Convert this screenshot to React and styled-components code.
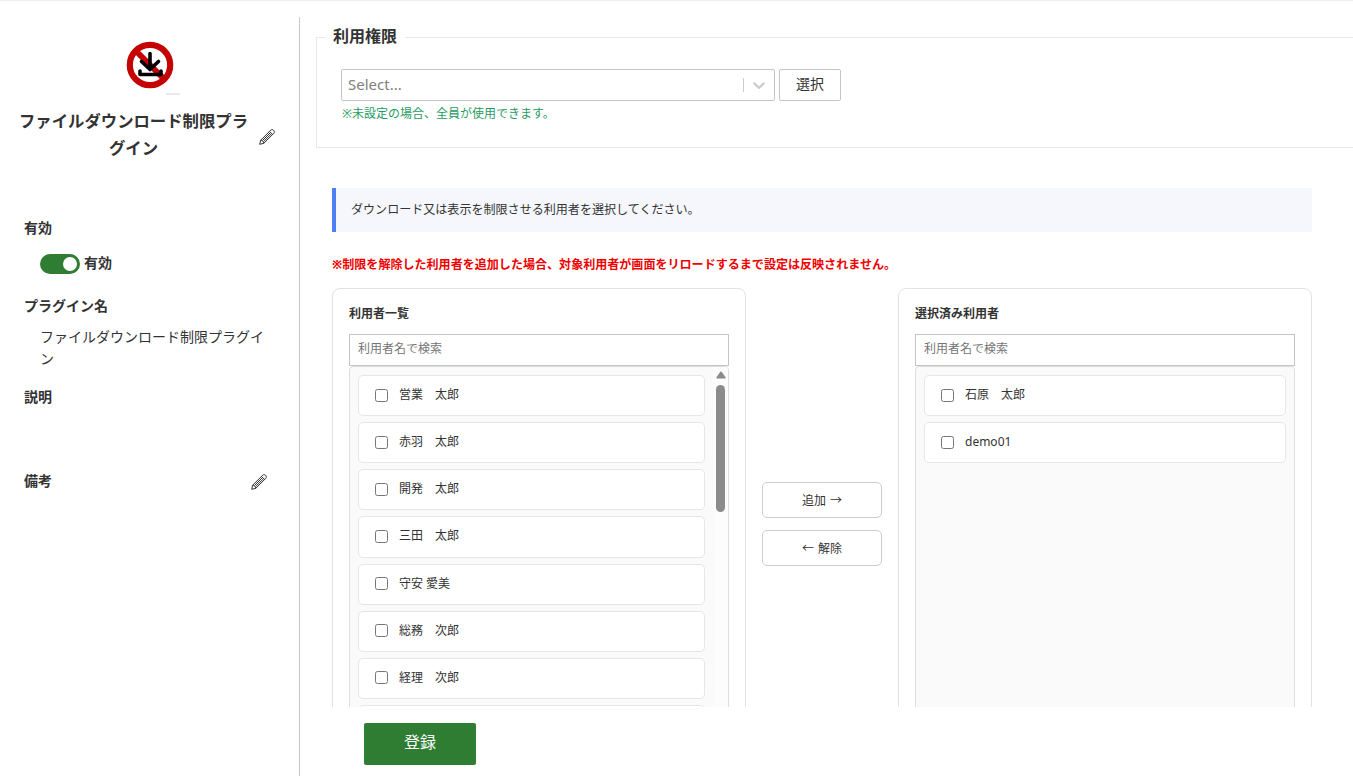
import React, { useState } from "react";
import styled, { createGlobalStyle } from "styled-components";

const USERS = [
    "営業　太郎",
    "赤羽　太郎",
    "開発　太郎",
    "三田　太郎",
    "守安 愛美",
    "総務　次郎",
    "経理　次郎",
    "",
];

const SELECTED = ["石原　太郎", "demo01"];

function Pencil() {
    return (
        <PencilIcon viewBox="0 0 16 16">
            <path d="M0.700 15.300L1.700 11.200L11.700 1.200C12.700 0.300 13.800 0.500 14.600 1.300C15.500 2.200 15.700 3.300 14.800 4.300L4.800 14.300Z" />
            <path d="M1.700 11.200C3.200 11.300 4.600 12.700 4.800 14.300M10.500 2.400L13.600 5.500M3.500 11.500L11.500 3.500M4.600 12.600L12.600 4.600" />
        </PencilIcon>
    );
}

function UserPanel({ title, users, scroll }) {
    return (
        <Panel>
            <PanelTitle>{title}</PanelTitle>
            <SearchInput placeholder="利用者名で検索" />
            <ListBox>
                <List>
                    {users.map((user) => (
                        <Item key={user}>
                            <input type="checkbox" />
                            <span>{user}</span>
                        </Item>
                    ))}
                </List>
                {scroll && (
                    <ScrollTrack>
                        <ScrollArrow viewBox="0 0 10 8">
                            <path d="M5 0.4c.4 0 .7.2.9.5l3.6 5.3c.4.7 0 1.4-.8 1.4H1.3c-.8 0-1.2-.7-.8-1.4L4.1.9c.2-.3.5-.5.9-.5z" />
                        </ScrollArrow>
                        <ScrollThumb />
                    </ScrollTrack>
                )}
            </ListBox>
        </Panel>
    );
}

export default function App() {
    const [enabled, setEnabled] = useState(true);

    return (
        <Page>
            <GlobalStyle />
            <Sidebar>
                <Logo viewBox="0 0 60 60">
                    <circle cx="30" cy="30" r="20.2" fill="#fff" stroke="#c40404" strokeWidth="6.2" />
                    <path d="M16 16L44 44" stroke="#c40404" strokeWidth="6" />
                    <path
                        d="M30 18.5V34M21.5 26.5L30 34.5L38.5 26.5M20 36V39.5H41V36"
                        fill="none"
                        stroke="#000"
                        strokeWidth="3.6"
                        strokeLinecap="round"
                        strokeLinejoin="round"
                    />
                    <path d="M46 59H60" stroke="#e2e2e2" strokeWidth="1.5" />
                </Logo>
                <TitleRow>
                    <PluginTitle>ファイルダウンロード制限プラグイン</PluginTitle>
                    <Pencil />
                </TitleRow>
                <Label>有効</Label>
                <ToggleRow>
                    <Toggle $on={enabled} onClick={() => setEnabled(!enabled)} />
                    <b>{enabled ? "有効" : "無効"}</b>
                </ToggleRow>
                <Label>プラグイン名</Label>
                <Value>ファイルダウンロード制限プラグイン</Value>
                <Label>説明</Label>
                <EmptyValue />
                <NoteRow>
                    <Label>備考</Label>
                    <Pencil />
                </NoteRow>
            </Sidebar>
            <Main>
                <Content>
                    <Fieldset>
                        <legend>利用権限</legend>
                        <SelectRow>
                            <Select>
                                <span>Select...</span>
                                <Separator />
                                <svg width="20" height="20" viewBox="0 0 20 20">
                                    <path d="M4.516 7.548c0.436-0.446 1.043-0.481 1.576 0l3.908 3.747 3.908-3.747c0.533-0.481 1.141-0.446 1.574 0 0.436 0.445 0.408 1.197 0 1.615-0.406 0.418-4.695 4.502-4.695 4.502-0.217 0.223-0.502 0.335-0.787 0.335s-0.57-0.112-0.789-0.335c0 0-4.287-4.084-4.695-4.502s-0.436-1.17 0-1.615z" />
                                </svg>
                            </Select>
                            <PickButton>選択</PickButton>
                        </SelectRow>
                        <Hint>※未設定の場合、全員が使用できます。</Hint>
                    </Fieldset>
                    <Info>ダウンロード又は表示を制限させる利用者を選択してください。</Info>
                    <Warning>
                        ※制限を解除した利用者を追加した場合、対象利用者が画面をリロードするまで設定は反映されません。
                    </Warning>
                    <Transfer>
                        <UserPanel title="利用者一覧" users={USERS} scroll />
                        <Moves>
                            <MoveButton>追加 →</MoveButton>
                            <MoveButton>← 解除</MoveButton>
                        </Moves>
                        <UserPanel title="選択済み利用者" users={SELECTED} />
                    </Transfer>
                </Content>
                <Footer>
                    <SubmitButton>登録</SubmitButton>
                </Footer>
            </Main>
        </Page>
    );
}

const GlobalStyle = createGlobalStyle`
    * {
        box-sizing: border-box;
    }
    body {
        margin: 0;
        background: #fff;
        color: #333;
        font-family: "Noto Sans", "Noto Sans CJK JP", sans-serif;
        font-size: 14px;
        overflow: hidden;
    }
    button, input {
        font-family: inherit;
        color: inherit;
    }
`
const Page = styled.div`
    display: flex;
    height: 776px;
    border-top: 1px solid #eee;
    overflow: hidden;
`
const Sidebar = styled.aside`
    display: flex;
    flex-direction: column;
    flex: none;
    width: 300px;
    margin-top: 16px;
    padding: 18px 24px 0;
    border-right: 1px solid #c8c8c8;
`
const Logo = styled.svg`
    width: 60px;
    height: 60px;
    align-self: center;
`
const PencilIcon = styled.svg`
    flex: none;
    width: 16px;
    height: 16px;
    fill: none;
    stroke: #333;
    stroke-width: 1;
    stroke-linejoin: round;
`
const TitleRow = styled.div`
    display: flex;
    align-items: center;
    margin: 13px 0 55px -8px;

    svg {
        margin: 3px 0 0 8px;
    }
`
const PluginTitle = styled.h3`
    width: 235px;
    margin: 0;
    font-size: 16.38px;
    line-height: 27px;
    text-align: center;
`
const Label = styled.div`
    font-weight: 700;
    line-height: 22px;
`
const ToggleRow = styled.div`
    display: flex;
    align-items: center;
    gap: 4px;
    margin: 15px 0 21px 16px;
    line-height: 22px;

    b {
        margin-top: -2px;
    }
`
const Toggle = styled.button`
    display: flex;
    justify-content: ${(props) => (props.$on ? "flex-end" : "flex-start")};
    width: 40px;
    height: 20px;
    padding: 3px;
    background: ${(props) => (props.$on ? "#2e7d32" : "#ccc")};
    border: none;
    border-radius: 10px;
    cursor: pointer;

    &::after {
        content: "";
        width: 14px;
        height: 14px;
        background: #fff;
        border-radius: 50%;
    }
`
const Value = styled.div`
    width: 228px;
    margin: 9px 0 16px 16px;
    line-height: 22px;
`
const EmptyValue = styled.div`
    height: 62px;
`
const NoteRow = styled.div`
    display: flex;
    justify-content: space-between;
    align-items: center;
    width: 243px;

    svg {
        margin-top: 2px;
    }
`
const Main = styled.main`
    display: flex;
    flex-direction: column;
    flex: none;
    width: 1100px;
    padding-left: 16px;
`
const Content = styled.div`
    height: 706px;
    padding-top: 24px;
    overflow: hidden;
`
const Fieldset = styled.fieldset`
    height: 123px;
    margin: 0;
    padding: 20px 24px 0;
    border: 1px solid #e8e8e8;

    legend {
        margin-left: -16px;
        padding: 0 8px 2px;
        font-size: 16px;
        font-weight: 700;
        line-height: 22px;
    }
`
const SelectRow = styled.div`
    display: flex;
    gap: 4px;
`
const Select = styled.div`
    display: flex;
    align-items: center;
    width: 434px;
    height: 32px;
    padding: 0 5px 0 6px;
    border: 1px solid #c4c4c4;
    border-radius: 2px;
    color: #808080;
    font-size: 15px;
    line-height: 28px;

    span:first-child {
        flex: 1;
        padding-bottom: 2px;
    }
    svg {
        fill: #ccc;
    }
`
const Separator = styled.span`
    width: 1px;
    height: 14px;
    margin-right: 5px;
    background: #ccc;
`
const PickButton = styled.button`
    width: 62px;
    height: 32px;
    padding: 0 0 4px;
    background: #fff;
    border: 1px solid #c4c4c4;
    border-radius: 2px;
    font-size: 14px;
`
const Hint = styled.div`
    margin: 4px 0 0 1px;
    color: #1e9b62;
    font-size: 12px;
    line-height: 18px;
`
const Info = styled.div`
    width: 980px;
    height: 44px;
    margin: 40px 0 0 16px;
    padding-left: 15px;
    background: #f5f7fc;
    border-left: 4px solid #4f7ff5;
    font-size: 12.05px;
    line-height: 44px;
`
const Warning = styled.div`
    margin: 24px 0 0 16px;
    color: #f00000;
    font-size: 12.05px;
    font-weight: 700;
    line-height: 18px;
`
const Transfer = styled.div`
    display: flex;
    align-items: center;
    gap: 16px;
    width: 980px;
    margin: 14px 0 0 16px;
`
const Panel = styled.section`
    width: 414px;
    height: 471px;
    padding: 16px;
    border: 1px solid #e2e2e2;
    border-radius: 8px;
`
const PanelTitle = styled.div`
    margin-bottom: 12px;
    font-size: 12px;
    font-weight: 700;
    line-height: 17px;
`
const SearchInput = styled.input`
    display: block;
    width: 100%;
    height: 32px;
    padding: 0 8px 3px;
    border: 1px solid #c4c4c4;
    font-size: 12px;
    outline: none;

    &::placeholder {
        color: #757575;
    }
`
const ListBox = styled.div`
    display: flex;
    height: 376px;
    background: #fafafa;
    border: 1px solid #ddd;
    border-radius: 4px;
    overflow: hidden;
`
const List = styled.div`
    flex: 1;
    padding: 8px;
`
const Item = styled.label`
    display: flex;
    align-items: center;
    height: 41.15px;
    margin-bottom: 6px;
    padding: 0 12px 1px;
    background: #fff;
    border: 1px solid #e6e6e6;
    border-radius: 5px;
    font-size: 12px;

    input {
        width: 13px;
        height: 13px;
        margin: 0 11px 0 4px;
    }
    span {
        padding-bottom: 2px;
    }
`
const ScrollTrack = styled.div`
    display: flex;
    flex-direction: column;
    align-items: center;
    width: 15px;
    padding-top: 4px;
    background: #fcfcfc;
`
const ScrollArrow = styled.svg`
    width: 10px;
    height: 8px;
    fill: #8b8b8b;
`
const ScrollThumb = styled.div`
    width: 9px;
    height: 127px;
    margin-top: 6px;
    background: #8b8b8b;
    border-radius: 5px;
`
const Moves = styled.div`
    display: flex;
    flex-direction: column;
    gap: 12px;
`
const MoveButton = styled.button`
    width: 120px;
    height: 36px;
    background: #fff;
    border: 1px solid #ccc;
    border-radius: 5px;
    font-size: 12px;
    word-spacing: 1px;
`
const Footer = styled.footer`
    padding: 16px 0 0 48px;
`
const SubmitButton = styled.button`
    width: 112px;
    height: 42px;
    padding: 0 0 6px;
    background: #2e7d32;
    border: none;
    border-radius: 2px;
    color: #fff;
    font-size: 16px;
`
